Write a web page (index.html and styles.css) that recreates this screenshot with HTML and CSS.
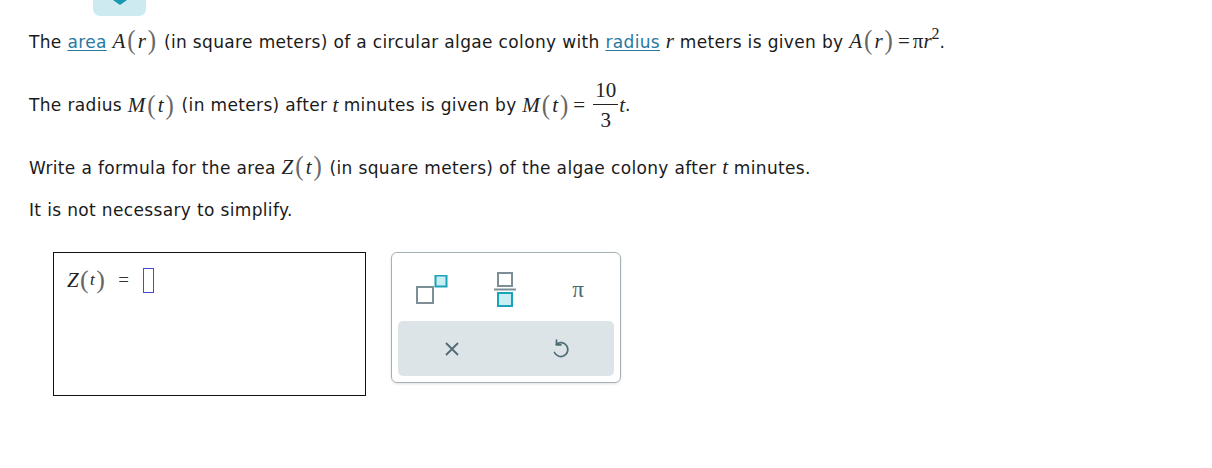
FILE: index.html
```html
<!DOCTYPE html>
<html>
<head>
<meta charset="utf-8">
<link rel="stylesheet" href="styles.css">
</head>
<body>
<div class="tab"><span class="tab-arrow"></span></div>
<div class="question">
  <p class="line l1">The <a class="link">area</a> <span class="m"><i>A</i><span class="par">(</span><i>r</i><span class="par">)</span></span> (in square meters) of a circular algae colony with <a class="link">radius</a> <span class="m"><i>r</i></span> meters is given by <span class="m"><i>A</i><span class="par">(</span><i>r</i><span class="par">)</span><span class="eqs">=</span>π<i>r</i><sup>2</sup></span>.</p>
  <p class="line l2">The radius&nbsp;<span class="m"><i>M</i><span class="par">(</span><i>t</i><span class="par">)</span></span>&nbsp;(in meters) after <span class="m">&nbsp;<i>t</i>&nbsp;</span> minutes is given by&nbsp;<span class="m"><i>M</i><span class="par">(</span><i>t</i><span class="par">)</span><span class="eqs">=</span><span class="frac"><span class="num">10</span><span class="den">3</span></span><i>t</i></span>.</p>
  <p class="line l3">Write a formula for the area <span class="m"><i>Z</i><span class="par">(</span><i>t</i><span class="par">)</span></span> (in square meters) of the algae colony after <span class="m"><i>t</i></span> minutes.</p>
  <p class="line l4">It is not necessary to simplify.</p>
</div>
<div class="answer">
  <div class="input-box">
    <span class="am"><i>Z</i><span class="apar">(</span><i class="st">t</i><span class="apar">)</span><span class="eq">=</span><span class="slot"></span></span>
  </div>
  <div class="keypad">
    <div class="krow">
      <button class="key">
        <svg width="36" height="30" viewBox="0 0 36 30"><rect x="1" y="12" width="16" height="16" fill="#fff" stroke="#7d8f96" stroke-width="2"/><rect x="19.5" y="0.5" width="11" height="11" fill="#c8eef4" stroke="#1aa3b8" stroke-width="2"/></svg>
      </button>
      <button class="key">
        <svg width="24" height="36" viewBox="0 0 24 36"><rect x="4" y="1" width="14" height="13" fill="#fff" stroke="#7d8f96" stroke-width="2"/><rect x="0" y="16.5" width="22" height="2" fill="#7d8f96"/><rect x="4" y="21" width="14" height="13" fill="#c8eef4" stroke="#1aa3b8" stroke-width="2"/></svg>
      </button>
      <button class="key pi">π</button>
    </div>
    <div class="krow grey">
      <button class="key">
        <svg width="16" height="16" viewBox="0 0 16 16"><path d="M2 2 L14 14 M14 2 L2 14" stroke="#4f6b74" stroke-width="1.8" fill="none"/></svg>
      </button>
      <button class="key">
        <svg width="20" height="22" viewBox="0 0 20 22"><path d="M6.2 6.3 A7 7 0 1 1 4.5 14.5" stroke="#4f6b74" stroke-width="1.7" fill="none" stroke-linecap="round"/><path d="M6.5 2 L6.5 6.8 L11 6.8" stroke="#4f6b74" stroke-width="1.7" fill="none" stroke-linecap="round" stroke-linejoin="round"/></svg>
      </button>
    </div>
  </div>
</div>
</body>
</html>
```
FILE: styles.css
```css
html, body { margin: 0; padding: 0; background: #fff; }
body {
  font-family: Verdana, "DejaVu Sans", sans-serif;
  font-size: 17px;
  letter-spacing: 0.35px;
  color: #1a1a1a;
  width: 1212px;
  height: 468px;
  overflow: hidden;
  position: relative;
}
.tab {
  position: absolute;
  left: 93px; top: 0;
  width: 53px; height: 16px;
  background: #cdeaf1;
  border-radius: 0 0 7px 7px;
}
.tab-arrow {
  position: absolute;
  left: 20px; top: 0;
  width: 0; height: 0;
  border-left: 7px solid transparent;
  border-right: 7px solid transparent;
  border-top: 5px solid #1598b2;
}
.question { padding: 0 0 0 29px; }
.line { margin: 0; white-space: nowrap; }
.l1 { padding-top: 28px; height: 24px; line-height: 24px; }
.l2 { margin-top: 28px; height: 50px; display: flex; align-items: center; }
.l3 { margin-top: 24px; height: 24px; line-height: 24px; }
.l4 { margin-top: 20px; height: 24px; line-height: 24px; }
.link { color: #2a78a0; text-decoration: underline; text-underline-offset: 2px; }
.m {
  font-family: "Liberation Serif", "Times New Roman", serif;
  font-size: 21px;
  letter-spacing: 0;
  color: #222;
  white-space: nowrap;
  font-synthesis: style;
}
.m i { font-style: italic; }
.par { font-size: 25px; color: #666; display: inline-block; transform: scaleY(1.1); margin: 0 2px; font-weight: 300; }
.eqs { margin: 0 3px; }
.m sup { font-size: 16px; vertical-align: 9px; line-height: 0; }
.l2 .m { display: inline-flex; align-items: center; }
.frac {
  display: inline-flex;
  flex-direction: column;
  align-items: center;
  margin: 0 1px 0 5px;
  font-size: 21px;
  line-height: 22px;
}
.num { border-bottom: 1px solid #222; padding: 0 2px 3px; }
.den { padding-top: 4px; }
.answer {
  display: flex;
  align-items: flex-start;
  margin: 30px 0 0 53px;
  gap: 25px;
}
.input-box {
  width: 311px;
  height: 142px;
  border: 1px solid #111;
  box-sizing: content-box;
}
.am {
  display: flex;
  align-items: center;
  padding: 12px 0 0 13px;
  font-family: "Liberation Serif", serif;
  font-size: 21px;
  color: #222;
}
.am i { font-style: italic; }
.apar { font-size: 26px; color: #666; margin: 0 1px; }
.st { font-size: 17px; }
.eq { margin: 0 14px 0 12px; font-size: 19px; color: #333; }
.slot {
  display: inline-block;
  border: 1.5px solid #4a4ad8;
  box-sizing: border-box;
  width: 11px;
  height: 25px;
}
.keypad {
  border: 1px solid #a7b1b5;
  border-radius: 6px;
  box-shadow: 0 1px 3px rgba(0,0,0,0.12);
  padding: 6px;
  box-sizing: border-box;
  width: 230px;
  height: 131px;
  display: flex;
  flex-direction: column;
}
.krow { display: flex; height: 62px; }
.krow.grey {
  background: #dde4e7;
  border-radius: 5px;
  height: 55px;
}
.key {
  flex: 1;
  background: transparent;
  border: 0;
  padding: 0;
  display: flex;
  align-items: center;
  justify-content: center;
  font: inherit;
}
.pi { font-family: "Liberation Serif", serif; font-size: 23px; color: #4a6670; }
```
